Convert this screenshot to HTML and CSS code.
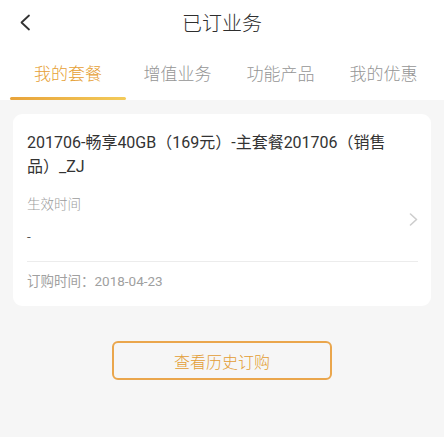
FILE: index.html
```html
<!DOCTYPE html>
<html lang="zh-CN">
<head>
    <meta charset="UTF-8">
    <meta name="viewport" content="width=device-width, initial-scale=1.0">
    <title>已订业务</title>
    <link rel="stylesheet" href="styles.css">
</head>
<body>
    <div class="page">
        <div class="nav-bar">
            <span class="nav-back">
                <svg width="12" height="17" viewBox="0 0 12 17">
                    <polyline points="10,1.5 2.5,8.5 10,15.5" fill="none" stroke="#333" stroke-width="1.8" stroke-linecap="round" stroke-linejoin="round"/>
                </svg>
            </span>
            <h1 class="nav-title">已订业务</h1>
        </div>

        <div class="tabs">
            <div class="tab active">我的套餐</div>
            <div class="tab">增值业务</div>
            <div class="tab">功能产品</div>
            <div class="tab">我的优惠</div>
        </div>

        <div class="content">
            <div class="card">
                <div class="card-main">
                    <div class="card-info">
                        <div class="plan-name">201706-畅享40GB（169元）-主套餐201706（销售品）_ZJ</div>
                        <div class="label">生效时间</div>
                        <div class="value">-</div>
                    </div>
                    <span class="card-arrow">
                        <svg width="9" height="13" viewBox="0 0 9 13">
                            <polyline points="1.5,1 7.5,6.5 1.5,12" fill="none" stroke="#cdcdcd" stroke-width="1.6" stroke-linecap="round" stroke-linejoin="round"/>
                        </svg>
                    </span>
                </div>
                <div class="card-footer">订购时间：2018-04-23</div>
            </div>

            <button class="history-button">查看历史订购</button>
        </div>
    </div>
</body>
</html>
```

FILE: styles.css
```css
/* Base */
body {
    margin: 0;
    font-family: Roboto, "Noto Sans CJK SC", sans-serif;
    font-weight: 300;
    background: #f6f6f6;
    color: #333;
}

.page {
    min-height: 437px;
    display: flex;
    flex-direction: column;
}

/* Navigation bar */
.nav-bar {
    position: relative;
    height: 46px;
    display: flex;
    align-items: center;
    justify-content: center;
    background: #fff;
}

.nav-back {
    position: absolute;
    left: 19px;
    top: 14px;
    display: flex;
}

.nav-title {
    margin: 0;
    padding-top: 2px;
    font-size: 20px;
    font-weight: 300;
    color: #2e2e2e;
    line-height: 44px;
}

/* Tabs */
.tabs {
    display: flex;
    height: 54px;
    padding-left: 10px;
    background: #fff;
}

.tab {
    position: relative;
    padding: 8px 17.5px 0;
    font-size: 17px;
    line-height: 40px;
    color: #959595;
}

.tab.active {
    padding: 8px 24px 0;
    color: #e6a034;
}

.tab.active::after {
    content: '';
    position: absolute;
    left: 0;
    right: 0;
    bottom: 0;
    height: 3px;
    border-radius: 2px;
    background: linear-gradient(90deg, #e8a33a 0%, #f3cb5a 100%);
}

/* Content */
.content {
    flex: 1;
    padding: 14px 13px 0 13px;
    display: flex;
    flex-direction: column;
    align-items: center;
}

.card {
    align-self: stretch;
    background: #fff;
    border-radius: 9px;
    padding: 0 13px 0 14px;
}

.card-main {
    display: flex;
    padding: 17px 0 17px;
    border-bottom: 1px solid #ececec;
}

.card-info {
    flex: 1;
    min-width: 0;
}

.plan-name {
    font-size: 16px;
    font-weight: 400;
    line-height: 24px;
    color: #333;
    padding-right: 2px;
}

.label {
    margin-top: 15px;
    font-size: 13.5px;
    line-height: 20px;
    color: #9c9c9c;
}

.value {
    margin-top: 12px;
    margin-bottom: -2px;
    font-size: 13.5px;
    font-weight: 400;
    line-height: 20px;
    color: #555;
}

.card-arrow {
    width: 22px;
    display: flex;
    justify-content: flex-end;
    margin-top: 82px;
    align-self: flex-start;
}

.card-footer {
    padding: 9px 0 15px;
    font-size: 13.5px;
    font-weight: 400;
    line-height: 20px;
    color: #a0a0a0;
}

/* History button */
.history-button {
    margin-top: 35px;
    width: 220px;
    height: 39px;
    background: transparent;
    border: 2px solid #eaa64c;
    border-radius: 6px;
    font-family: Roboto, "Noto Sans CJK SC", sans-serif;
    font-weight: 300;
    font-size: 16px;
    color: #e39d33;
    cursor: pointer;
}
```
